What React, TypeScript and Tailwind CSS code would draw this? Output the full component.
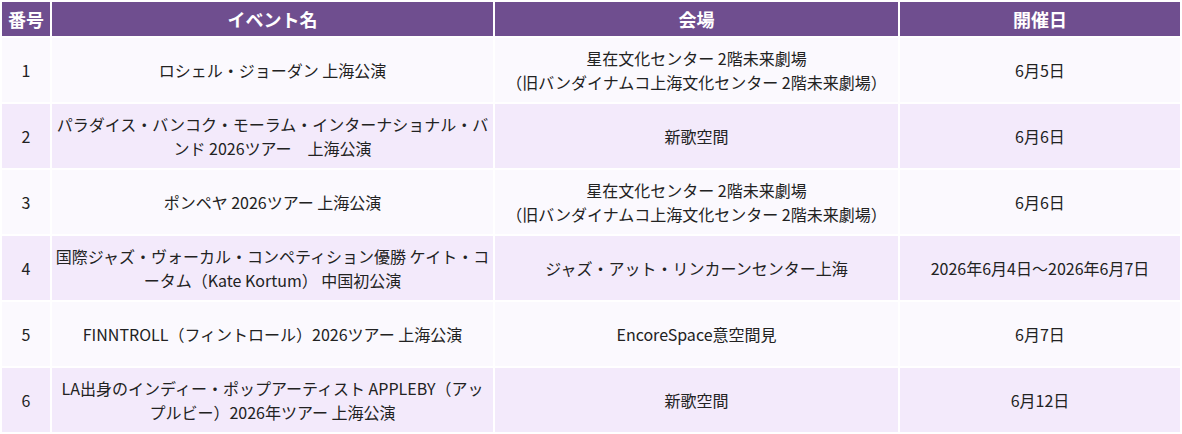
import React from 'react';

interface EventRow {
  no: number;
  name: string;
  venue: string[];
  date: string;
}

const rows: EventRow[] = [
  {
    no: 1,
    name: 'ロシェル・ジョーダン 上海公演',
    venue: ['星在文化センター 2階未来劇場', '（旧バンダイナムコ上海文化センター 2階未来劇場）'],
    date: '6月5日',
  },
  {
    no: 2,
    name: 'パラダイス・バンコク・モーラム・インターナショナル・バンド 2026ツアー　上海公演',
    venue: ['新歌空間'],
    date: '6月6日',
  },
  {
    no: 3,
    name: 'ポンペヤ 2026ツアー 上海公演',
    venue: ['星在文化センター 2階未来劇場', '（旧バンダイナムコ上海文化センター 2階未来劇場）'],
    date: '6月6日',
  },
  {
    no: 4,
    name: '国際ジャズ・ヴォーカル・コンペティション優勝 ケイト・コータム（Kate Kortum） 中国初公演',
    venue: ['ジャズ・アット・リンカーンセンター上海'],
    date: '2026年6月4日～2026年6月7日',
  },
  {
    no: 5,
    name: 'FINNTROLL（フィントロール）2026ツアー 上海公演',
    venue: ['EncoreSpace意空間見'],
    date: '6月7日',
  },
  {
    no: 6,
    name: 'LA出身のインディー・ポップアーティスト APPLEBY（アップルビー）2026年ツアー 上海公演',
    venue: ['新歌空間'],
    date: '6月12日',
  },
];

const App: React.FC = () => {
  return (
    <div className="w-[1182px] h-[434px] bg-white font-['Noto_Sans_CJK_JP','Noto_Sans',sans-serif] text-[16px] text-[#222]">
      <table className="w-full border-separate border-spacing-[2px] table-fixed">
        <colgroup>
          <col className="w-[48px]" />
          <col className="w-[441px]" />
          <col className="w-[403px]" />
          <col />
        </colgroup>
        <thead>
          <tr>
            {['番号', 'イベント名', '会場', '開催日'].map(h => (
              <th key={h} className="h-[34px] bg-[#6f4e8f] text-white text-[18px] font-bold text-center leading-[22px] px-[2px] whitespace-nowrap">
                {h}
              </th>
            ))}
          </tr>
        </thead>
        <tbody>
          {rows.map((row, i) => {
            const bg = i % 2 === 0 ? 'bg-[#fbf9fe]' : 'bg-[#f3eafb]';
            return (
              <tr key={row.no}>
                <td className={`${bg} h-[64px] text-center align-middle leading-[24px] px-[2px]`}>{row.no}</td>
                <td className={`${bg} h-[64px] text-center align-middle leading-[24px] px-[2px]`}>{row.name}</td>
                <td className={`${bg} h-[64px] text-center align-middle leading-[24px] px-[2px]`}>
                  {row.venue.map(v => (
                    <div key={v}>{v}</div>
                  ))}
                </td>
                <td className={`${bg} h-[64px] text-center align-middle leading-[24px] px-[2px]`}>{row.date}</td>
              </tr>
            );
          })}
        </tbody>
      </table>
    </div>
  );
};

export default App;
